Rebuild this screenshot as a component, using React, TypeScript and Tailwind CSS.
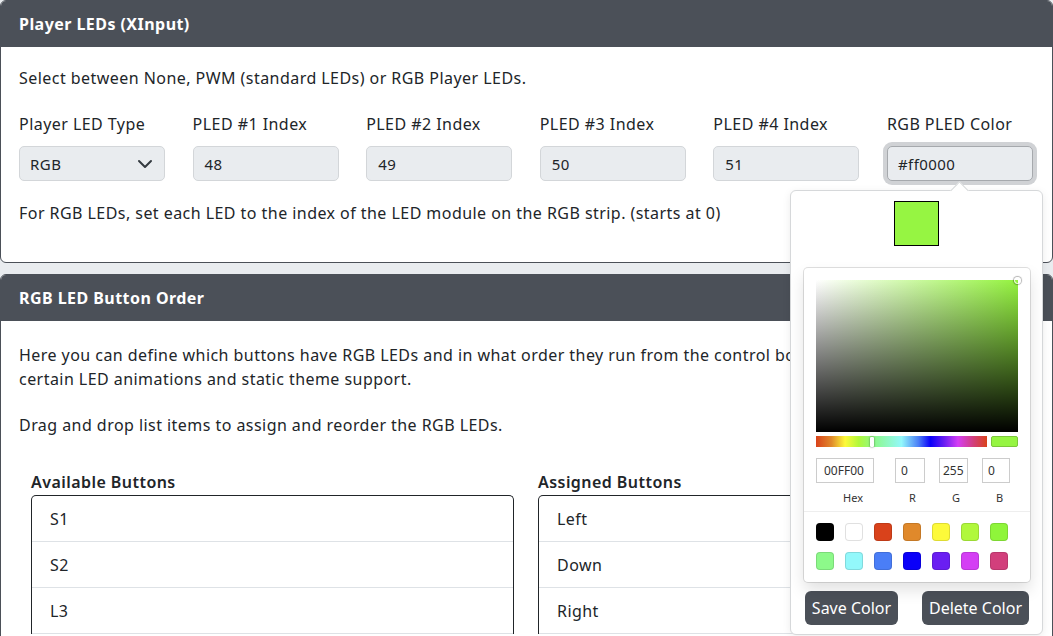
import React from "react";

const fields = [
  { label: "PLED #1 Index", value: "48" },
  { label: "PLED #2 Index", value: "49" },
  { label: "PLED #3 Index", value: "50" },
  { label: "PLED #4 Index", value: "51" },
];

const swatches = [
  "bg-[#000000]",
  "bg-[#ffffff]",
  "bg-[#d9421b]",
  "bg-[#e0892b]",
  "bg-[#fdfa3a]",
  "bg-[#b1f83b]",
  "bg-[#8ff53a]",
  "bg-[#8df98a]",
  "bg-[#93f8fb]",
  "bg-[#4a7ef7]",
  "bg-[#0a00f9]",
  "bg-[#6a1ef2]",
  "bg-[#d43ef4]",
  "bg-[#d23f7c]",
];

const available = ["S1", "S2", "L3"];
const assigned = ["Left", "Down", "Right"];

const ButtonList = ({ title, items }: { title: string; items: string[] }) => (
  <div>
    <div className="font-semibold">{title}</div>
    <div className="mt-[1px] rounded-t-[5px] border-x border-t border-[#212529]">
      {items.map((item) => (
        <div
          key={item}
          className="h-[46px] pl-[18px] flex items-center border-b border-[#dee2e6]"
        >
          {item}
        </div>
      ))}
    </div>
  </div>
);

const ColorPicker = () => (
  <div className="absolute left-[790px] top-[190px] w-[253px] h-[445px] rounded-[6px] border border-[#d6d8da] bg-white tracking-normal shadow-[0_2px_8px_rgba(0,0,0,0.08)]">
    <div className="absolute left-[162px] top-[-7px] w-[13px] h-[13px] rotate-45 border-t border-l border-[#d6d8da] bg-white" />
    <div className="relative flex justify-center pt-[10px]">
      <div className="w-[45px] h-[45px] border border-black bg-[#96f542]" />
    </div>
    <div className="relative mx-[13px] mt-[22px] w-[226px] rounded-[4px] bg-white p-[12px] shadow-[0_0_0_1px_rgba(0,0,0,0.12),0_8px_16px_rgba(0,0,0,0.12)]">
      <div className="relative w-[202px] h-[152px] bg-[linear-gradient(to_right,#ffffff,#94f23f)]">
        <div className="w-full h-full bg-[linear-gradient(to_top,#000000,rgba(0,0,0,0))]" />
        <div className="absolute right-[-3px] top-[-3px] w-[7px] h-[7px] rounded-full border border-white shadow-[0_0_1px_1px_rgba(0,0,0,0.3)]" />
      </div>
      <div className="mt-[4px] flex gap-[4px]">
        <div className="relative w-[171px] h-[11px] bg-[linear-gradient(to_right,#d9421b_0%,#e0892b_9%,#fdfa3a_17%,#b1f83b_25%,#8df98a_34%,#93f8fb_50%,#4a7ef7_60%,#0a00f9_67%,#6a1ef2_75%,#d43ef4_83%,#d23f7c_92%,#d9421b_100%)]">
          <div className="absolute left-[54px] top-[1px] w-[4px] h-[10px] rounded-[1px] bg-white shadow-[0_0_2px_rgba(0,0,0,0.6)]" />
        </div>
        <div className="w-[27px] h-[11px] rounded-[2px] border border-[#7cc83a] bg-[#96f542]" />
      </div>
      <div className="mt-[11px] flex text-[12px] leading-none text-[#333]">
        <div className="w-[58px] h-[25px] border border-[#ccc] pl-[7px] flex items-center">00FF00</div>
        <div className="ml-[21px] w-[30px] h-[25px] border border-[#ccc] pl-[5px] flex items-center">0</div>
        <div className="ml-[14px] w-[29px] h-[25px] border border-[#ccc] pl-[3px] flex items-center">255</div>
        <div className="ml-[14px] w-[28px] h-[25px] border border-[#ccc] pl-[5px] flex items-center">0</div>
      </div>
      <div className="mt-[8px] flex text-[11px] leading-[14px] text-[#333]">
        <div className="w-[58px] pl-[27px]">Hex</div>
        <div className="ml-[21px] w-[30px] pl-[14px]">R</div>
        <div className="ml-[14px] w-[29px] pl-[13px]">G</div>
        <div className="ml-[14px] w-[28px] pl-[14px]">B</div>
      </div>
      <div className="-mx-[12px] mt-[6px] border-t border-[#eee]" />
      <div className="mt-[11px] grid grid-cols-7 gap-x-[11px] gap-y-[11px] w-[192px]">
        {swatches.map((c, i) => (
          <div
            key={i}
            className={`w-[18px] h-[18px] rounded-[4px] shadow-[inset_0_0_0_1px_rgba(0,0,0,0.12)] ${c}`}
          />
        ))}
      </div>
    </div>
    <div className="mt-[9px] ml-[14px] mr-[13px] flex justify-between">
      <button className="h-[34px] w-[93px] rounded-[6px] bg-[#4b5058] text-white">Save Color</button>
      <button className="h-[34px] w-[107px] rounded-[6px] bg-[#4b5058] text-white">Delete Color</button>
    </div>
  </div>
);

export default function App() {
  return (
    <div className="relative h-[636px] overflow-hidden bg-[#e9ecef] font-['Noto_Sans',sans-serif] text-[16px] leading-6 tracking-[0.45px] text-[#212529]">
      <div className="overflow-hidden rounded-[6px] border border-[#4b5058] bg-white">
        <div className="h-[46px] bg-[#4b5058] pl-[18px] flex items-center font-bold text-white">
          Player LEDs (XInput)
        </div>
        <div className="pl-[18px] pr-[19px] pt-[19px] pb-[37px]">
          <p>Select between None, PWM (standard LEDs) or RGB Player LEDs.</p>
          <div className="mt-[22px] grid grid-cols-6 gap-x-[27.5px]">
            <div>
              <div>Player LED Type</div>
              <div className="mt-[10px] h-[35px] rounded-[5px] border border-[#d3d6d9] bg-[#e9ecef] pl-[10px] pr-[11px] flex items-center justify-between text-[15px]">
                <span>RGB</span>
                <svg width="16" height="16" viewBox="0 0 16 16" fill="none" stroke="#343a40" strokeWidth="2" strokeLinecap="round" strokeLinejoin="round">
                  <path d="m2 5 6 6 6-6" />
                </svg>
              </div>
            </div>
            {fields.map((f) => (
              <div key={f.label}>
                <div>{f.label}</div>
                <div className="mt-[10px] h-[35px] rounded-[5px] border border-[#d3d6d9] bg-[#e9ecef] pl-[11px] flex items-center text-[15px]">
                  {f.value}
                </div>
              </div>
            ))}
            <div>
              <div>RGB PLED Color</div>
              <div className="mt-[10px] h-[35px] rounded-[5px] border border-[#a6a9ad] bg-[#e9ecef] pl-[10px] flex items-center text-[15px] shadow-[0_0_0_4px_#d0d2d5]">
                #ff0000
              </div>
            </div>
          </div>
          <p className="mt-[20px]">
            For RGB LEDs, set each LED to the index of the LED module on the RGB strip. (starts at 0)
          </p>
        </div>
      </div>

      <div className="mt-[11px] overflow-hidden rounded-[6px] border border-[#4b5058] bg-white">
        <div className="h-[46px] bg-[#4b5058] pl-[18px] flex items-center font-bold text-white">
          RGB LED Button Order
        </div>
        <div className="pl-[18px] pr-[19px] pt-[22px] pb-[16px]">
          <p>
            <span className="block whitespace-nowrap">
              Here you can define which buttons have RGB LEDs and in what order they run from the control board. This is required for
            </span>
            <span className="block">certain LED animations and static theme support.</span>
          </p>
          <p className="mt-[22px]">Drag and drop list items to assign and reorder the RGB LEDs.</p>
          <div className="mt-[33px] grid grid-cols-2 gap-x-[24px] px-[12px]">
            <ButtonList title="Available Buttons" items={available} />
            <ButtonList title="Assigned Buttons" items={assigned} />
          </div>
        </div>
      </div>

      <ColorPicker />
    </div>
  );
}
